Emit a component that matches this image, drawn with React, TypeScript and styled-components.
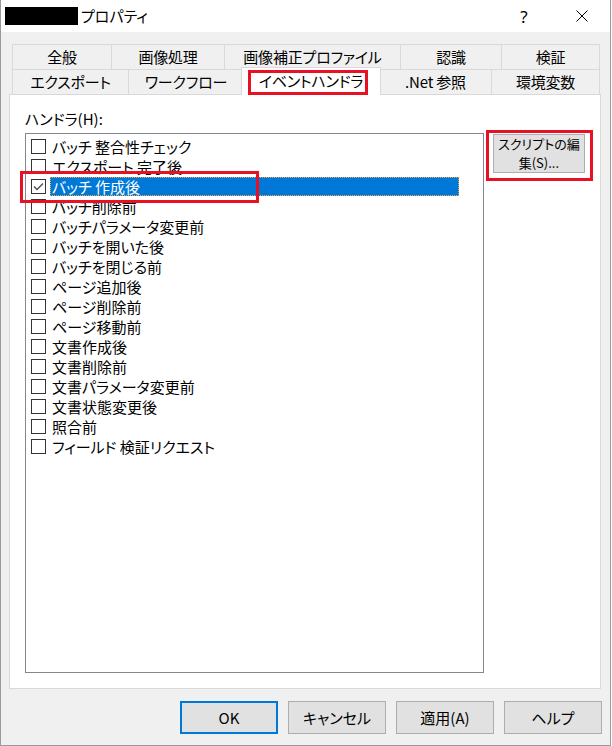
import styled, { createGlobalStyle } from 'styled-components';

const GlobalStyle = createGlobalStyle`
	body {
		margin: 0;
		background: #ffffff;
		font-family: 'Noto Sans CJK JP', 'Noto Sans', sans-serif;
		font-feature-settings: 'palt';
		color: #000;
	}
`;

const Window = styled.div`
	box-sizing: border-box;
	width: 611px;
	height: 746px;
	background: #f0f0f0;
	border: 1px solid #9a9a9a;
	border-top: none;
	display: flex;
	flex-direction: column;
`;

const TitleBar = styled.div`
	height: 32px;
	background: #fff;
	display: flex;
	align-items: center;
	padding-left: 4px;
`;

const Redacted = styled.div`
	width: 73px;
	height: 18px;
	background: #000;
`;

const Title = styled.span`
	margin-left: 3px;
	font-size: 15px;
	line-height: 18px;
`;

const Spacer = styled.div`
	flex: 1;
`;

const CaptionButton = styled.div`
	width: 46px;
	height: 32px;
	display: flex;
	align-items: center;
	justify-content: center;
	font-family: 'Noto Sans', sans-serif;
	font-size: 17px;
	& + & {
		margin-left: 12px;
		margin-right: 5px;
	}
`;

const Body = styled.div`
	padding-top: 12px;
`;

const TabStrip = styled.div`
	margin-left: 11px;
	display: flex;
	flex-direction: column;
`;

const TabRow = styled.div`
	display: flex;
	align-items: flex-start;
	height: 25px;
`;

const Tab = styled.div<{ $width: number; $last?: boolean }>`
	box-sizing: border-box;
	width: ${(p) => p.$width}px;
	height: 25px;
	display: flex;
	align-items: center;
	justify-content: center;
	border-top: 1px solid #d9d9d9;
	border-left: 1px solid #d9d9d9;
	border-right: ${(p) => (p.$last ? '1px solid #d9d9d9' : 'none')};
	font-size: 15px;
	line-height: 20px;
	letter-spacing: -0.2px;
	white-space: nowrap;
`;

const ActiveTab = styled(Tab)`
	position: relative;
	z-index: 1;
	width: ${(p) => p.$width + 4}px;
	height: 28px;
	margin: -2px -2px -1px;
	padding-bottom: 1px;
	background: #fff;
	border-right: 1px solid #d9d9d9;
`;

const RedMark = styled.div<{ $left: number; $top: number; $w: number; $h: number }>`
	position: absolute;
	left: ${(p) => p.$left}px;
	top: ${(p) => p.$top}px;
	width: ${(p) => p.$w}px;
	height: ${(p) => p.$h}px;
	box-sizing: border-box;
	border: 3px solid #e81123;
	z-index: 2;
	pointer-events: none;
`;

const Panel = styled.div`
	box-sizing: border-box;
	height: 595px;
	margin: 0 9px 0 8px;
	border: 1px solid #d9d9d9;
	background: #fff;
	padding: 14px 15px 0;
	display: flex;
	flex-direction: column;
`;

const FieldLabel = styled.div`
	font-size: 15px;
	line-height: 20px;
	margin-bottom: 4px;
`;

const Content = styled.div`
	display: flex;
	align-items: flex-start;
	gap: 9px;
`;

const ListBox = styled.div`
	box-sizing: border-box;
	width: 463px;
	height: 540px;
	border: 1px solid #828790;
	padding-top: 2px;
	display: flex;
	flex-direction: column;
`;

const Row = styled.div`
	position: relative;
	display: flex;
	align-items: center;
	height: 20px;
	padding: 0 24px 0 5px;
`;

const Box = styled.div`
	box-sizing: border-box;
	width: 15px;
	height: 15px;
	border: 1px solid #333;
	background: #fff;
	margin-right: 4px;
	flex: none;
	display: flex;
	align-items: center;
	justify-content: center;
`;

const ItemLabel = styled.div<{ $selected?: boolean }>`
	height: 19px;
	line-height: 19px;
	padding: 0 2px;
	font-size: 15px;
	white-space: nowrap;
	${(p) =>
		p.$selected &&
		`
		flex: 1;
		background: #0078d7;
		color: #fff;
		outline: 1px dotted #f7a43a;
		outline-offset: -1px;
	`}
`;

const SideButton = styled.div`
	position: relative;
	box-sizing: border-box;
	width: 93px;
	height: 39px;
	margin-top: 1px;
	border: 1px solid #adadad;
	background: #e1e1e1;
	display: flex;
	flex-direction: column;
	align-items: center;
`;

const ButtonLine = styled.span`
	display: block;
	height: 18px;
	font-size: 13px;
	line-height: 18px;
	white-space: nowrap;
	& + & {
		margin-top: 1px;
	}
`;

const Footer = styled.div`
	display: flex;
	justify-content: flex-end;
	gap: 10px;
	padding: 12px 8px 0 0;
`;

const DialogButton = styled.div<{ $default?: boolean }>`
	box-sizing: border-box;
	width: 98px;
	height: 33px;
	display: flex;
	align-items: center;
	justify-content: center;
	background: #e1e1e1;
	border: ${(p) => (p.$default ? '2px solid #0078d7' : '1px solid #adadad')};
	font-size: 15px;
`;

type TabDef = { label: string; width: number; active?: boolean };

const topTabs: TabDef[] = [
	{ label: '全般', width: 99 },
	{ label: '画像処理', width: 113 },
	{ label: '画像補正プロファイル', width: 176 },
	{ label: '認識', width: 101 },
	{ label: '検証', width: 99 },
];

const bottomTabs: TabDef[] = [
	{ label: 'エクスポート', width: 116 },
	{ label: 'ワークフロー', width: 115 },
	{ label: 'イベントハンドラ', width: 136, active: true },
	{ label: '.Net 参照', width: 112 },
	{ label: '環境変数', width: 109 },
];

const handlers = [
	'バッチ 整合性チェック',
	'エクスポート 完了後',
	'バッチ 作成後',
	'バッチ削除前',
	'バッチパラメータ変更前',
	'バッチを開いた後',
	'バッチを閉じる前',
	'ページ追加後',
	'ページ削除前',
	'ページ移動前',
	'文書作成後',
	'文書削除前',
	'文書パラメータ変更前',
	'文書状態変更後',
	'照合前',
	'フィールド 検証リクエスト',
];

const renderTabs = (tabs: TabDef[]) =>
	tabs.map((tab, i) =>
		tab.active ? (
			<ActiveTab key={tab.label} $width={tab.width}>
				{tab.label}
				<RedMark $left={6} $top={2} $w={120} $h={25} />
			</ActiveTab>
		) : (
			<Tab key={tab.label} $width={tab.width} $last={i === tabs.length - 1}>
				{tab.label}
			</Tab>
		)
	);

const App = () => {
	const selected = 2;

	return (
		<>
			<GlobalStyle />
			<Window>
				<TitleBar>
					<Redacted />
					<Title>プロパティ</Title>
					<Spacer />
					<CaptionButton>?</CaptionButton>
					<CaptionButton>
						<svg width="12" height="12" viewBox="0 0 12 12">
							<path d="M0.5 0.5 L11.5 11.5 M11.5 0.5 L0.5 11.5" stroke="#000" strokeWidth="1" />
						</svg>
					</CaptionButton>
				</TitleBar>
				<Body>
					<TabStrip>
						<TabRow>{renderTabs(topTabs)}</TabRow>
						<TabRow>{renderTabs(bottomTabs)}</TabRow>
					</TabStrip>
					<Panel>
						<FieldLabel>ハンドラ(H):</FieldLabel>
						<Content>
							<ListBox>
								{handlers.map((label, i) => (
									<Row key={label}>
										<Box>
											{i === selected && (
												<svg width="13" height="13" viewBox="0 0 13 13">
													<polyline
														points="2,6.5 5,9.5 11,3.5"
														fill="none"
														stroke="#4d4d4d"
														strokeWidth="1.3"
													/>
												</svg>
											)}
										</Box>
										<ItemLabel $selected={i === selected}>{label}</ItemLabel>
										{i === selected && <RedMark $left={-6} $top={-5} $w={239} $h={32} />}
									</Row>
								))}
							</ListBox>
							<SideButton>
								<ButtonLine>スクリプトの編</ButtonLine>
								<ButtonLine>集(S)...</ButtonLine>
								<RedMark $left={-8} $top={-5} $w={107} $h={51} />
							</SideButton>
						</Content>
					</Panel>
				</Body>
				<Footer>
					<DialogButton $default>OK</DialogButton>
					<DialogButton>キャンセル</DialogButton>
					<DialogButton>適用(A)</DialogButton>
					<DialogButton>ヘルプ</DialogButton>
				</Footer>
			</Window>
		</>
	);
};

export default App;
